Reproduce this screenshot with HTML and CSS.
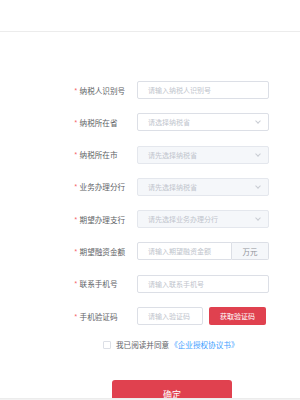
FILE: index.html
```html
<!DOCTYPE html>
<html lang="zh-CN">
<head>
    <meta charset="UTF-8">
    <meta name="viewport" content="width=device-width, initial-scale=1.0">
    <title>企业授权</title>
    <link rel="stylesheet" href="styles.css">
</head>
<body>
    <div class="page">
        <div class="header"></div>
        <form class="form">
            <div class="row">
                <label class="label"><span class="req">*</span>纳税人识别号</label>
                <div class="input">请输入纳税人识别号</div>
            </div>
            <div class="row">
                <label class="label"><span class="req">*</span>纳税所在省</label>
                <div class="input select">请选择纳税省<span class="arrow"></span></div>
            </div>
            <div class="row">
                <label class="label"><span class="req">*</span>纳税所在市</label>
                <div class="input select disabled">请先选择纳税省<span class="arrow"></span></div>
            </div>
            <div class="row">
                <label class="label"><span class="req">*</span>业务办理分行</label>
                <div class="input select disabled">请先选择纳税省<span class="arrow"></span></div>
            </div>
            <div class="row">
                <label class="label"><span class="req">*</span>期望办理支行</label>
                <div class="input select disabled">请先选择业务办理分行<span class="arrow"></span></div>
            </div>
            <div class="row">
                <label class="label"><span class="req">*</span>期望融资金额</label>
                <div class="group">
                    <div class="input grow">请输入期望融资金额</div>
                    <div class="addon">万元</div>
                </div>
            </div>
            <div class="row">
                <label class="label"><span class="req">*</span>联系手机号</label>
                <div class="input">请输入联系手机号</div>
            </div>
            <div class="row">
                <label class="label"><span class="req">*</span>手机验证码</label>
                <div class="input code">请输入验证码</div>
                <button type="button" class="btn-code">获取验证码</button>
            </div>
            <div class="agree">
                <span class="checkbox"></span>
                <span>我已阅读并同意</span>
                <a href="#" class="link">《企业授权协议书》</a>
            </div>
            <div class="actions">
                <button type="button" class="btn-submit">确定</button>
            </div>
        </form>
    </div>
</body>
</html>
```

FILE: styles.css
```css
body {
    margin: 0;
    font-family: "Noto Sans CJK SC", "Noto Sans", sans-serif;
    background-color: #f2f2f2;
    color: #606266;
}

.page {
    height: 398px;
    overflow: hidden;
    background-color: #fff;
    border-bottom: 1px solid #ececec;
}

.header {
    height: 31px;
    border-bottom: 1px solid #ececec;
}

.form {
    padding: 49px 0 0 74px;
}

.row {
    display: flex;
    align-items: center;
    height: 18px;
    margin-bottom: 14.3px;
}

.label {
    width: 63px;
    flex-shrink: 0;
    font-size: 7.6px;
    color: #606266;
    white-space: nowrap;
}

.req {
    color: #f56c6c;
    margin-right: 2px;
}

.input {
    box-sizing: border-box;
    width: 132px;
    height: 18px;
    padding: 0 10px;
    border: 1px solid #dcdfe6;
    border-radius: 2px;
    font-size: 7px;
    line-height: 16px;
    color: #c0c4cc;
    white-space: nowrap;
    display: flex;
    align-items: center;
}

.select {
    justify-content: space-between;
    padding-right: 8px;
}

.disabled {
    background-color: #f5f7fa;
    border-color: #e4e7ed;
}

.arrow {
    width: 3px;
    height: 3px;
    border-right: 1px solid #c8ccd3;
    border-bottom: 1px solid #c8ccd3;
    transform: rotate(45deg);
    margin-top: -2px;
}

.group {
    display: flex;
    width: 132px;
}

.group .grow {
    width: auto;
    flex: 1;
    border-radius: 2px 0 0 2px;
}

.addon {
    box-sizing: border-box;
    width: 37px;
    height: 18px;
    border: 1px solid #dcdfe6;
    border-left: none;
    border-radius: 0 2px 2px 0;
    background-color: #f5f7fa;
    color: #909399;
    font-size: 7.5px;
    display: flex;
    align-items: center;
    justify-content: center;
}

.code {
    width: 66px;
}

.btn-code {
    margin-left: 6px;
    width: 57px;
    height: 18px;
    padding: 0;
    border: none;
    border-radius: 2px;
    background-color: #e0414f;
    color: #fff;
    font-family: inherit;
    font-size: 7px;
}

.agree {
    display: flex;
    align-items: center;
    margin: 5px 0 0 29px;
    font-size: 7.6px;
    color: #606266;
}

.checkbox {
    box-sizing: border-box;
    width: 8px;
    height: 8px;
    border: 1px solid #dcdfe6;
    border-radius: 1px;
    margin-right: 5px;
}

.link {
    color: #409eff;
    text-decoration: none;
    margin-left: 1px;
}

.actions {
    margin: 29px 0 0 38px;
}

.btn-submit {
    width: 120px;
    height: 30px;
    padding: 0;
    border: none;
    border-radius: 3px;
    background-color: #e0414f;
    color: #fff;
    font-family: inherit;
    font-size: 9px;
}
```
